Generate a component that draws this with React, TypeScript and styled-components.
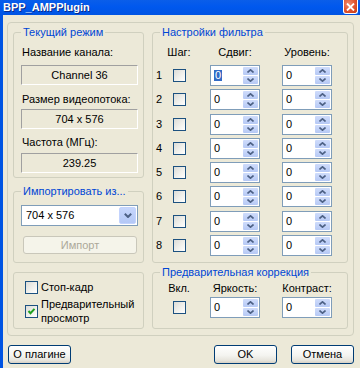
import React from "react";
import styled, { createGlobalStyle } from "styled-components";

const GlobalStyle = createGlobalStyle`
  html, body {
    margin: 0;
    padding: 0;
    background: #ece9d8;
  }
  body {
    font-family: "Liberation Sans", Arial, sans-serif;
    font-size: 11px;
    color: #000;
  }
  * {
    box-sizing: border-box;
  }
`;

const ROWS = [1, 2, 3, 4, 5, 6, 7, 8];

const UpArrow = () => (
  <svg width="7" height="4" viewBox="0 0 7 4">
    <path d="M0.5 3.5 L3.5 0.8 L6.5 3.5" fill="none" stroke="#4d6185" strokeWidth="1.6" />
  </svg>
);

const DownArrow = () => (
  <svg width="7" height="4" viewBox="0 0 7 4">
    <path d="M0.5 0.5 L3.5 3.2 L6.5 0.5" fill="none" stroke="#4d6185" strokeWidth="1.6" />
  </svg>
);

const Spin: React.FC<{ value: string; focused?: boolean }> = ({ value, focused }) => (
  <SpinBox>
    <SpinValue>{focused ? <Selected>{value}</Selected> : value}</SpinValue>
    <SpinButtons>
      <SpinHalf>
        <UpArrow />
      </SpinHalf>
      <SpinHalf>
        <DownArrow />
      </SpinHalf>
    </SpinButtons>
  </SpinBox>
);

const CheckBox: React.FC<{ checked?: boolean }> = ({ checked }) => (
  <Box>
    {checked && (
      <svg width="9" height="9" viewBox="0 0 9 9">
        <path d="M1.5 4 L3.5 6.2 L7.5 1.8" fill="none" stroke="#21a121" strokeWidth="2" />
      </svg>
    )}
  </Box>
);

const App: React.FC = () => {
  return (
    <Window>
      <GlobalStyle />
      <TitleBar>
        <Title>BPP_AMPPlugin</Title>
        <CloseButton>
          <svg width="9" height="8" viewBox="0 0 9 8">
            <path d="M1 0.5 L8 7.5 M8 0.5 L1 7.5" stroke="#fff" strokeWidth="1.8" />
          </svg>
        </CloseButton>
      </TitleBar>

      <Body>
        <Frame>
          <Column $width={131}>
            <Group $height={146}>
              <Legend>Текущий режим</Legend>
              <GroupInner>
                <FieldLabel $top={7}>Название канала:</FieldLabel>
                <ReadOnlyBox $top={6}>Channel 36</ReadOnlyBox>
                <FieldLabel $top={8}>Размер видеопотока:</FieldLabel>
                <ReadOnlyBox $top={3}>704 x 576</ReadOnlyBox>
                <FieldLabel $top={7}>Частота (МГц):</FieldLabel>
                <ReadOnlyBox $top={4}>239.25</ReadOnlyBox>
              </GroupInner>
            </Group>

            <Group $height={72} $top={13}>
              <Legend>Импортировать из...</Legend>
              <GroupInner>
                <Combo>
                  <ComboValue>704 x 576</ComboValue>
                  <ComboButton>
                    <svg width="8" height="5" viewBox="0 0 8 5">
                      <path d="M0.8 0.8 L4 4 L7.2 0.8" fill="none" stroke="#4d6185" strokeWidth="2" />
                    </svg>
                  </ComboButton>
                </Combo>
                <DisabledButton>Импорт</DisabledButton>
              </GroupInner>
            </Group>

            <Group $height={57} $top={9}>
              <CheckList>
                <CheckRow>
                  <CheckBox />
                  <CheckText>Стоп-кадр</CheckText>
                </CheckRow>
                <CheckRow $top={3}>
                  <CheckBox checked />
                  <CheckText>
                    Предварительный
                    <br />
                    просмотр
                  </CheckText>
                </CheckRow>
              </CheckList>
            </Group>
          </Column>

          <Column $width={196}>
            <Group $height={231}>
              <Legend>Настройки фильтра</Legend>
              <ControlGrid $top={7}>
                <span />
                <HeaderCell>Шаг:</HeaderCell>
                <HeaderCell $end>Сдвиг:</HeaderCell>
                <HeaderCell $end>Уровень:</HeaderCell>
              </ControlGrid>
              <ControlGrid $top={6} $rowGap={3.3}>
                {ROWS.map((n) => (
                  <React.Fragment key={n}>
                    <RowNumber>{n}</RowNumber>
                    <CheckCell>
                      <CheckBox />
                    </CheckCell>
                    <SpinCell>
                      <Spin value="0" focused={n === 1} />
                    </SpinCell>
                    <SpinCell>
                      <Spin value="0" />
                    </SpinCell>
                  </React.Fragment>
                ))}
              </ControlGrid>
            </Group>

            <Group $height={57} $top={9}>
              <Legend>Предварительная коррекция</Legend>
              <ControlGrid $top={2.5}>
                <span />
                <HeaderCell>Вкл.</HeaderCell>
                <HeaderCell $end>Яркость:</HeaderCell>
                <HeaderCell $end>Контраст:</HeaderCell>
              </ControlGrid>
              <ControlGrid $top={2.5}>
                <span />
                <CheckCell>
                  <CheckBox />
                </CheckCell>
                <SpinCell>
                  <Spin value="0" />
                </SpinCell>
                <SpinCell>
                  <Spin value="0" />
                </SpinCell>
              </ControlGrid>
            </Group>
          </Column>
        </Frame>

        <ButtonRow>
          <PushButton>О плагине</PushButton>
          <Spacer />
          <PushButton>OK</PushButton>
          <PushButton>Отмена</PushButton>
        </ButtonRow>
      </Body>
    </Window>
  );
};

const Window = styled.div`
  width: 360px;
  height: 368px;
  display: flex;
  flex-direction: column;
  background: #ece9d8;
  overflow: hidden;
`;

const TitleBar = styled.div`
  height: 15px;
  flex: none;
  display: flex;
  align-items: flex-start;
  justify-content: space-between;
  padding: 0 2px 0 3px;
  background: linear-gradient(180deg, #0a5ee9 0%, #0058ee 45%, #0054e3 100%);
`;

const Title = styled.span`
  color: #fff;
  font-weight: bold;
  font-size: 11px;
  line-height: 13px;
  padding-top: 1px;
  text-shadow: 1px 1px 0 #0a2a8a;
`;

const CloseButton = styled.div`
  width: 15px;
  height: 14px;
  display: flex;
  align-items: center;
  justify-content: center;
  border: 1px solid #fff;
  border-top: none;
  border-radius: 0 0 3px 3px;
  background: radial-gradient(circle at 35% 30%, #f08a6c 0%, #e0532f 55%, #c23a12 100%);
`;

const Body = styled.div`
  flex: 1;
  display: flex;
  flex-direction: column;
  border-left: 3px solid #0054e3;
  padding: 7px 6px 0 4px;
`;

const Frame = styled.div`
  height: 314px;
  flex: none;
  display: flex;
  gap: 8px;
  padding: 9px 5px 0;
  border: 1px solid #d0d0bf;
  border-radius: 4px;
`;

const Column = styled.div<{ $width: number }>`
  width: ${(p) => p.$width}px;
  flex: none;
  display: flex;
  flex-direction: column;
`;

const Group = styled.div<{ $height: number; $top?: number }>`
  height: ${(p) => p.$height}px;
  margin-top: ${(p) => p.$top ?? 0}px;
  flex: none;
  display: flex;
  flex-direction: column;
  border: 1px solid #d0d0bf;
  border-radius: 3px;
`;

const Legend = styled.div`
  align-self: flex-start;
  margin: -7px 0 0 7px;
  padding: 0 2px;
  background: #ece9d8;
  color: #0046d5;
  line-height: 13px;
  white-space: nowrap;
`;

const GroupInner = styled.div`
  display: flex;
  flex-direction: column;
  padding: 0 5px 0 7px;
`;

const FieldLabel = styled.div<{ $top: number }>`
  margin-top: ${(p) => p.$top}px;
  padding-left: 1px;
  line-height: 13px;
  white-space: nowrap;
`;

const ReadOnlyBox = styled.div<{ $top: number }>`
  margin-top: ${(p) => p.$top}px;
  height: 20px;
  line-height: 18px;
  text-align: center;
  border: 1px solid;
  border-color: #a0a0a0 #ffffff #ffffff #a0a0a0;
`;

const Combo = styled.div`
  margin-top: 7px;
  height: 21px;
  display: flex;
  background: #fff;
  border: 1px solid #7f9db9;
`;

const ComboValue = styled.div`
  flex: 1;
  padding-left: 4px;
  line-height: 19px;
`;

const ComboButton = styled.div`
  width: 17px;
  margin: 1px;
  display: flex;
  align-items: center;
  justify-content: center;
  border-radius: 2px;
  border: 1px solid #c3d3fd;
  background: linear-gradient(180deg, #c6d6fc 0%, #b4c8f6 100%);
`;

const DisabledButton = styled.div`
  margin: 10px 1px 0 2px;
  height: 18px;
  line-height: 16px;
  text-align: center;
  color: #aca899;
  background: #f5f4ea;
  border: 1px solid #c9c7ba;
  border-radius: 3px;
`;

const CheckList = styled.div`
  display: flex;
  flex-direction: column;
  padding: 7px 0 0 11px;
`;

const CheckRow = styled.div<{ $top?: number }>`
  margin-top: ${(p) => p.$top ?? 0}px;
  display: flex;
  align-items: center;
  gap: 3px;
`;

const CheckText = styled.div`
  line-height: 14px;
`;

const Box = styled.div`
  width: 13px;
  height: 13px;
  flex: none;
  display: flex;
  align-items: center;
  justify-content: center;
  border: 1px solid #1c5180;
  background: linear-gradient(135deg, #dcdcd7 0%, #f2f2ee 60%, #ffffff 100%);
`;

const ControlGrid = styled.div<{ $top: number; $rowGap?: number }>`
  margin-top: ${(p) => p.$top}px;
  display: grid;
  grid-template-columns: 12px 28px 67px 72px;
  grid-auto-rows: minmax(13px, auto);
  row-gap: ${(p) => p.$rowGap ?? 0}px;
  align-items: center;
`;

const HeaderCell = styled.div<{ $end?: boolean }>`
  justify-self: ${(p) => (p.$end ? "end" : "center")};
  width: ${(p) => (p.$end ? "50px" : "auto")};
  text-align: center;
  line-height: 13px;
  white-space: nowrap;
`;

const RowNumber = styled.div`
  text-align: center;
  line-height: 13px;
`;

const CheckCell = styled.div`
  display: flex;
  justify-content: center;
`;

const SpinCell = styled.div`
  display: flex;
  justify-content: flex-end;
`;

const SpinBox = styled.div`
  width: 50px;
  height: 21px;
  display: flex;
  background: #fff;
  border: 1px solid #7f9db9;
`;

const SpinValue = styled.div`
  flex: 1;
  padding-left: 3px;
  line-height: 19px;
`;

const Selected = styled.span`
  display: inline-block;
  padding: 0 1px;
  line-height: 11px;
  color: #fff;
  background: #316ac5;
`;

const SpinButtons = styled.div`
  width: 16px;
  display: flex;
  flex-direction: column;
  gap: 1px;
  padding: 1px 1px 1px 0;
`;

const SpinHalf = styled.div`
  flex: 1;
  display: flex;
  align-items: center;
  justify-content: center;
  border-radius: 1px;
  background: linear-gradient(180deg, #cfdcfb 0%, #b6c9f5 100%);
`;

const ButtonRow = styled.div`
  margin-top: 9px;
  display: flex;
  gap: 14px;
  padding-left: 1px;
`;

const Spacer = styled.div`
  flex: 1;
`;

const PushButton = styled.div`
  width: 63px;
  height: 19px;
  line-height: 17px;
  text-align: center;
  border: 1px solid #003c74;
  border-radius: 3px;
  background: linear-gradient(180deg, #ffffff 0%, #f4f4f0 55%, #e6e4dc 85%, #d6d0c5 100%);
`;

export default App;
